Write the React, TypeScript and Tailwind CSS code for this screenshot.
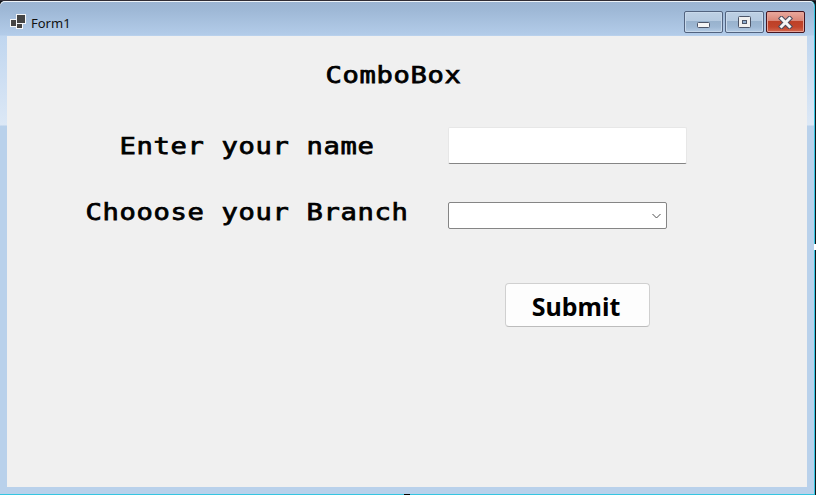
import type { ReactNode } from 'react';

function FormIcon() {
  return (
    <svg width="17" height="17" viewBox="0 0 17 17" shapeRendering="crispEdges" className="shrink-0">
      <path fill="#f4f6f8" d="M6 0h10v10h-3v5H6v-2H0V5h6z" />
      <path fill="#444" d="M7 1h8v8H7zM1 6h5v6H1zM7 10h5v4H7z" />
    </svg>
  );
}

function CaptionButton({ children, close = false }: { children: ReactNode; close?: boolean }) {
  return (
    <button
      className={
        close
          ? 'flex h-[22px] w-[39px] items-center justify-center rounded-[2px] border border-[#451520] bg-[linear-gradient(#e9a99d_0%,#d98576_45%,#bd4027_46%,#c2452c_75%,#d46950_100%)] shadow-[inset_0_0_0_1px_#e7a397]'
          : 'flex h-[22px] w-[39px] items-center justify-center rounded-[2px] border border-[#52637f] bg-[linear-gradient(#bed0e4_0%,#b5cae0_45%,#98b2cd_46%,#9eb8d4_75%,#b4cbe4_100%)] shadow-[inset_0_0_0_1px_#c8d9eb]'
      }
    >
      {children}
    </button>
  );
}

function Wide({ children }: { children: string }) {
  return (
    <span className="block origin-left scale-x-[1.18] pl-[0.5px] whitespace-pre font-['DejaVu_Sans_Mono',monospace] text-[23px] leading-[26px] tracking-[0.56px] text-black [-webkit-text-stroke:0.75px_black]">
      {children}
    </span>
  );
}

export default function App() {
  return (
    <div className="relative h-[495px] w-[816px] overflow-hidden bg-[#101418] font-['Noto_Sans',sans-serif]">
      <div className="h-px bg-[#302c34]" />
      <div className="flex h-[494px] w-[815px] flex-col rounded-t-[5px] border-r border-b border-[#35c5e1] bg-[linear-gradient(#9bb4d2_0px,#9fb9d7_10px,#b3cce9_34px,#c0d6ef_35px,#dce8f6_124px,#b9d1eb_125px,#b9d1eb_100%)] shadow-[inset_0_1px_0_#eef3f8]">
        <header className="flex h-[35px] shrink-0 items-start pr-[9px] pl-[10px]">
          <div className="pt-[13px]"><FormIcon /></div>
          <span className="mt-[12px] ml-[4px] text-[13px] leading-[20px] text-[#111]">Form1</span>
          <div className="mt-[10px] ml-auto flex gap-[2px]">
            <CaptionButton>
              <svg width="15" height="14" viewBox="0 0 15 14">
                <rect x="1.5" y="7.5" width="12" height="5" rx="1" fill="#f5f5f5" stroke="#4c5568" />
              </svg>
            </CaptionButton>
            <CaptionButton>
              <svg width="13" height="13" viewBox="0 0 13 13">
                <rect x=".5" y=".5" width="12" height="11" rx="1" fill="#f0f0f0" stroke="#4c5568" />
                <rect x="4.5" y="4.5" width="4" height="3" fill="#8eaed0" stroke="#4c5568" />
              </svg>
            </CaptionButton>
            <CaptionButton close>
              <svg width="15" height="13" viewBox="0 0 15 13">
                <path d="M3.5 2.5l8 8M11.5 2.5l-8 8" stroke="#4c4b5c" strokeWidth="5" strokeLinecap="square" strokeLinejoin="round" />
                <path d="M3.5 2.5l8 8M11.5 2.5l-8 8" stroke="#f6f6f6" strokeWidth="3" strokeLinecap="square" />
              </svg>
            </CaptionButton>
          </div>
        </header>
        <main className="mr-[7px] ml-[7px] h-[451px] shrink-0 bg-[#f0f0f0]">
          <h1 className="h-[52px] pt-[26px] pl-[318px]"><Wide>ComboBox</Wide></h1>
          <div className="mt-[39px] flex h-[37px]">
            <label className="w-[441px] pt-[6px] pl-[112px]"><Wide>Enter your name</Wide></label>
            <input className="h-[37px] w-[239px] rounded-[2px] border border-[#e7e7e7] border-b-[#858585] bg-white outline-none" />
          </div>
          <div className="mt-[35px] flex h-[34px]">
            <label className="w-[441px] pl-[78px]"><Wide>Chooose your Branch</Wide></label>
            <div className="mt-[3px] flex h-[27px] w-[219px] items-center justify-end rounded-[2px] border border-[#858585] bg-white pr-[5px]">
              <svg width="9" height="6" viewBox="0 0 9 6" fill="none" stroke="#505050">
                <path d="M.5 1l4 4 4-4" />
              </svg>
            </div>
          </div>
          <button className="mt-[50px] ml-[498px] flex h-[44px] w-[145px] items-center justify-center rounded-[4px] border border-[#d0d0d0] border-b-[#bcbcbc] bg-[#fdfdfd] pt-px pr-[3px] font-['Noto_Sans',sans-serif] text-[25px] leading-[34px] font-bold text-black">
            Submit
          </button>
        </main>
      </div>
      <div className="absolute top-[244px] right-0 h-[6px] w-[2px] bg-white" />
      <div className="absolute bottom-0 left-[404px] h-px w-[6px] bg-black" />
    </div>
  );
}
